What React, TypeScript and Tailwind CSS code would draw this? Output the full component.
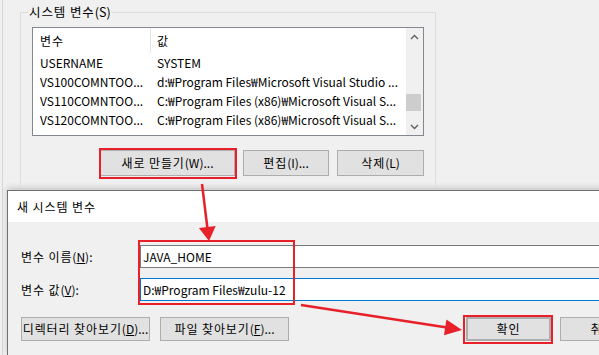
import React from "react";

function Btn({ children, className = "" }: { children: React.ReactNode; className?: string }) {
  return (
    <div
      className={
        "shrink-0 flex items-center justify-center bg-[#e1e1e1] border border-[#adadad] text-[12px] text-black whitespace-nowrap " +
        className
      }
    >
      {children}
    </div>
  );
}

function K({ children }: { children: React.ReactNode }) {
  return <span className="tracking-[0.9px]">{children}</span>;
}

const rows: [string, string][] = [
  ["USERNAME", "SYSTEM"],
  ["VS100COMNTOO...", "d:₩Program Files₩Microsoft Visual Studio ..."],
  ["VS110COMNTOO...", "C:₩Program Files (x86)₩Microsoft Visual S..."],
  ["VS120COMNTOO...", "C:₩Program Files (x86)₩Microsoft Visual S..."],
];

export default function App() {
  return (
    <div className="relative w-[599px] h-[355px] overflow-hidden bg-[#f0f0f0] text-black font-['Noto_Sans_CJK_KR','Noto_Sans',sans-serif] text-[12px]">
      <div className="ml-[2px] h-full border-l border-[#d6d6d6] flex flex-col">
        {/* background window */}
        <div className="h-[188px] pt-[12px] pl-[17px] overflow-hidden shrink-0">
          <div className="relative w-[416px] h-[200px] border border-[#dcdcdc] border-b-0">
            <div className="absolute left-[7px] -top-[10px] bg-[#f0f0f0] px-[1px] leading-[18px] text-[12.5px]">
              <K>시스템 변수</K>(S)
            </div>
            <div className="ml-[11px] mt-[14px] w-[392px] h-[109px] border border-[#828790] bg-white flex overflow-hidden">
              <div className="flex-1 overflow-hidden">
                <div className="flex h-[25px] items-center">
                  <div className="w-[118px] h-full pl-[7px] border-r border-[#e5e5e5] flex items-center">
                    <K>변수</K>
                  </div>
                  <div className="pl-[6px]">값</div>
                </div>
                {rows.map(([a, b]) => (
                  <div key={a + b} className="flex h-[19px] items-center whitespace-nowrap">
                    <div className="w-[118px] shrink-0 pl-[7px] overflow-hidden">{a}</div>
                    <div className="pl-[6px] overflow-hidden">{b}</div>
                  </div>
                ))}
              </div>
              <div className="w-[17px] h-full bg-[#f0f0f0] flex flex-col shrink-0">
                <div className="h-[17px] flex items-center justify-center">
                  <svg width="9" height="6" viewBox="0 0 9 6">
                    <path d="M1 5 L4.5 1.5 L8 5" stroke="#606060" strokeWidth="1.4" fill="none" />
                  </svg>
                </div>
                <div className="h-[49px]" />
                <div className="h-[17px] w-[15px] bg-[#cdcdcd]" />
                <div className="flex-1" />
                <div className="h-[17px] flex items-center justify-center">
                  <svg width="9" height="6" viewBox="0 0 9 6">
                    <path d="M1 1 L4.5 4.5 L8 1" stroke="#606060" strokeWidth="1.4" fill="none" />
                  </svg>
                </div>
              </div>
            </div>
            <div className="mt-[14px] ml-[79px] flex gap-[8px]">
              <Btn className="w-[135px] h-[26px]">
                <K>새로 만들기</K>(W)...
              </Btn>
              <Btn className="w-[86px] h-[26px]">
                <K>편집</K>(I)...
              </Btn>
              <Btn className="w-[87px] h-[26px]">
                <K>삭제</K>(L)
              </Btn>
            </div>
          </div>
        </div>

        {/* dialog */}
        <div className="ml-[4px] mt-[2px] flex-1 w-[640px] border-t border-l border-[#707070] bg-[#f0f0f0] shadow-[0_-2px_6px_rgba(0,0,0,0.18)] flex flex-col">
          <div className="h-[31px] bg-white pl-[9px] flex items-center">
            <K>새 시스템 변수</K>
          </div>
          <div className="pt-[23px] pl-[13px]">
            <div className="flex items-center">
              <div className="w-[119px] shrink-0">
                <K>변수 이름</K>(<span className="underline">N</span>):
              </div>
              <div className="w-[470px] shrink-0 h-[23px] border border-[#7a7a7a] bg-white pl-[2px] flex items-center">
                JAVA_HOME
              </div>
            </div>
            <div className="flex items-center mt-[10px]">
              <div className="w-[119px] shrink-0">
                <K>변수 값</K>(<span className="underline">V</span>):
              </div>
              <div className="w-[470px] shrink-0 h-[23px] border border-[#0078d7] bg-white pl-[2px] flex items-center">
                D:₩Program Files₩zulu-12
              </div>
            </div>
            <div className="flex mt-[16px] items-start">
              <Btn className="w-[129px] h-[24px]">
                <span>
                  <K>디렉터리 찾아보기</K>(<span className="underline">D</span>)...
                </span>
              </Btn>
              <Btn className="w-[129px] h-[24px] ml-[10px]">
                <span>
                  <K>파일 찾아보기</K>(<span className="underline">F</span>)...
                </span>
              </Btn>
              <Btn className="w-[85px] h-[24px] ml-[177px] border-2 border-[#0078d7]">
                <K>확인</K>
              </Btn>
              <Btn className="w-[85px] h-[24px] ml-[9px]">
                <K>취소</K>
              </Btn>
            </div>
          </div>
        </div>
      </div>

      {/* annotations */}
      <div className="absolute left-[99px] top-[148px] w-[138px] h-[31px] border-2 border-[#e8202a]" />
      <div className="absolute left-[138px] top-[240px] w-[157px] h-[65px] border-2 border-[#e8202a]" />
      <div className="absolute left-[463px] top-[315px] w-[90px] h-[29px] border-2 border-[#e8202a]" />
      <svg className="absolute left-0 top-0" width="599" height="355" viewBox="0 0 599 355">
        <line x1="202" y1="184" x2="207.5" y2="229" stroke="#e8202a" strokeWidth="2.5" />
        <polygon points="209,241 198.9,228.1 215.7,226.1" fill="#e8202a" />
        <line x1="301" y1="305" x2="447" y2="327.5" stroke="#e8202a" strokeWidth="2.5" />
        <polygon points="462,330 446.4,319.5 444,335.3" fill="#e8202a" />
      </svg>
    </div>
  );
}
